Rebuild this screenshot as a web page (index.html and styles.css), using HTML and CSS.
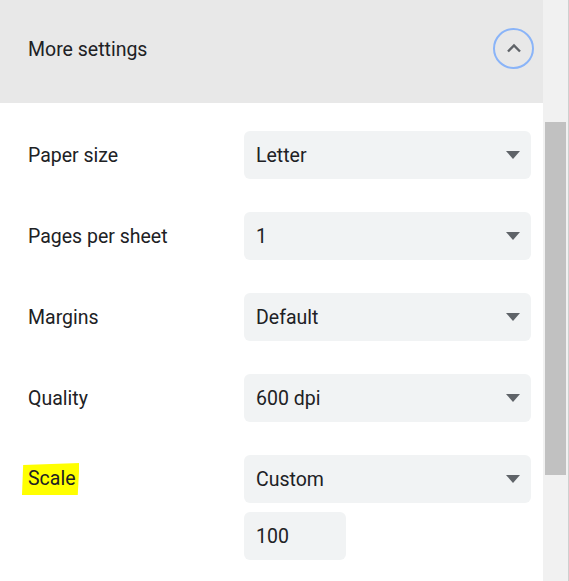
FILE: index.html
```html
<!DOCTYPE html>
<html lang="en">
<head>
<meta charset="utf-8">
<title>More settings</title>
<link rel="stylesheet" href="styles.css">
</head>
<body>
<div class="frame">
  <main class="panel">
    <header class="header">
      <span class="header-title">More settings</span>
      <button class="collapse" aria-label="Collapse">
        <svg width="16" height="10" viewBox="0 0 16 10"><path d="M2 8.5 L8 2.5 L14 8.5" fill="none" stroke="#5f6368" stroke-width="2.4"/></svg>
      </button>
    </header>
    <section class="settings">
      <div class="row">
        <span class="label">Paper size</span>
        <div class="select"><span>Letter</span><i class="caret"></i></div>
      </div>
      <div class="row">
        <span class="label">Pages per sheet</span>
        <div class="select"><span>1</span><i class="caret"></i></div>
      </div>
      <div class="row">
        <span class="label">Margins</span>
        <div class="select"><span>Default</span><i class="caret"></i></div>
      </div>
      <div class="row">
        <span class="label">Quality</span>
        <div class="select"><span>600 dpi</span><i class="caret"></i></div>
      </div>
      <div class="row row-scale">
        <span class="label"><span class="mark">Scale</span></span>
        <div class="control-stack">
          <div class="select"><span>Custom</span><i class="caret"></i></div>
          <div class="number">100</div>
        </div>
      </div>
    </section>
  </main>
  <div class="scrollbar"><div class="thumb"></div></div>
</div>
</body>
</html>
```
FILE: styles.css
```css
html, body {
  margin: 0;
  padding: 0;
  background: #ffffff;
  overflow: hidden;
}
body {
  font-family: Roboto, "Liberation Sans", Arial, sans-serif;
  color: #202124;
  font-size: 19.5px;
}
.frame {
  display: flex;
  width: 569px;
  height: 581px;
}
.panel {
  width: 543px;
  flex: none;
  display: flex;
  flex-direction: column;
}
.header {
  height: 103px;
  background: #e8e8e8;
  display: flex;
  align-items: center;
  justify-content: space-between;
  padding: 0 9px 0 28px;
  box-sizing: border-box;
}
.header-title {
  position: relative;
  top: -2px;
}
.collapse {
  width: 41px;
  height: 41px;
  border-radius: 50%;
  border: 2px solid #8ab4f8;
  background: transparent;
  box-sizing: border-box;
  display: flex;
  align-items: center;
  justify-content: center;
  padding: 0;
  margin-top: -6px;
}
.collapse svg { display: block; margin-top: -2px; }
.settings {
  display: flex;
  flex-direction: column;
  gap: 33px;
  padding: 28px 12px 0 28px;
}
.row {
  display: flex;
  align-items: flex-start;
}
.label {
  width: 216px;
  flex: none;
  height: 48px;
  display: flex;
  align-items: center;
}
.select, .number {
  background: #f1f3f4;
  border-radius: 6px;
  height: 48px;
  box-sizing: border-box;
  display: flex;
  align-items: center;
  padding-left: 12px;
}
.select {
  width: 287px;
  justify-content: space-between;
  padding-right: 11px;
}
.caret {
  width: 0;
  height: 0;
  border-left: 7.5px solid transparent;
  border-right: 7.5px solid transparent;
  border-top: 8px solid #5f6368;
}
.control-stack {
  display: flex;
  flex-direction: column;
  gap: 9px;
}
.number {
  width: 102px;
}
.mark {
  background: #ffff00;
  padding: 4px 4px 5px 6px;
  margin-left: -6px;
  clip-path: polygon(2% 6%, 100% 0%, 97% 100%, 0% 100%);
}
.scrollbar {
  width: 26px;
  flex: none;
  background: #f1f1f1;
  border-right: 1px solid #cfcfcf;
  box-sizing: border-box;
  padding: 122px 2px 0 2px;
}
.thumb {
  width: 21px;
  height: 353px;
  background: #c1c1c1;
}
```
